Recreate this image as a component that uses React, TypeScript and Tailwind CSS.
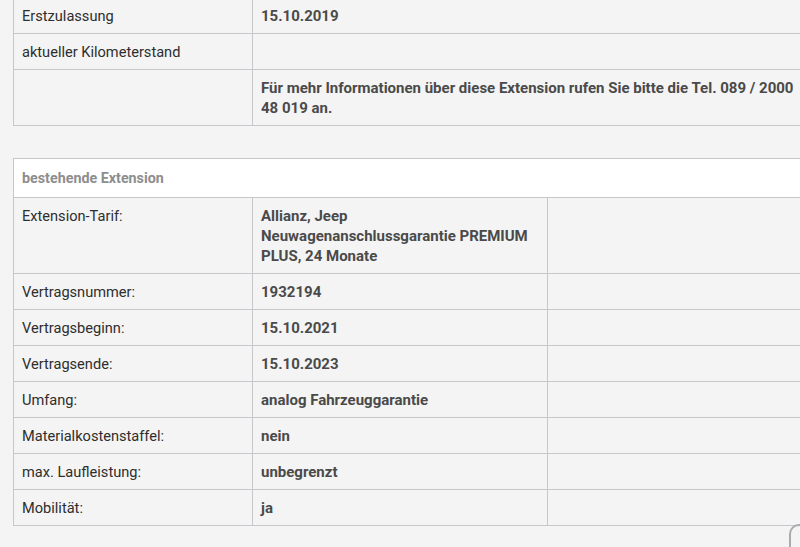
import React from 'react';

type Row = { label: string; value: string };

const extensionRows: Row[] = [
  { label: 'Vertragsnummer:', value: '1932194' },
  { label: 'Vertragsbeginn:', value: '15.10.2021' },
  { label: 'Vertragsende:', value: '15.10.2023' },
  { label: 'Umfang:', value: 'analog Fahrzeuggarantie' },
  { label: 'Materialkostenstaffel:', value: 'nein' },
  { label: 'max. Laufleistung:', value: 'unbegrenzt' },
  { label: 'Mobilität:', value: 'ja' },
];

const cell = 'border border-[#c5c7cb] px-2 pt-[8px] pb-[7px] align-top leading-5';
const labelCell = `${cell} text-[14.6px] text-[#2e2e2e] font-normal`;
const valueCell = `${cell} text-[15px] text-[#4a4a4a] font-bold`;

export default function App() {
  return (
    <div
      className="relative w-[800px] h-[547px] overflow-hidden bg-[#f4f4f4]"
      style={{ fontFamily: 'Roboto, "Noto Sans", sans-serif' }}
    >
      <div className="-mt-[3px] pl-[13px]">
        {/* Fahrzeugdaten */}
        <table className="w-[800px] table-fixed border-collapse">
          <colgroup>
            <col className="w-[239px]" />
            <col />
          </colgroup>
          <tbody>
            <tr>
              <td className={labelCell}>Erstzulassung</td>
              <td className={valueCell}>15.10.2019</td>
            </tr>
            <tr>
              <td className={labelCell}>aktueller Kilometerstand</td>
              <td className={valueCell}>&nbsp;</td>
            </tr>
            <tr>
              <td className={labelCell}></td>
              <td className={valueCell}>
                Für mehr Informationen über diese Extension rufen Sie bitte die Tel. 089 / 2000 48 019 an.
              </td>
            </tr>
          </tbody>
        </table>

        {/* bestehende Extension */}
        <table className="mt-[32px] w-[800px] table-fixed border-collapse">
          <colgroup>
            <col className="w-[239px]" />
            <col className="w-[295px]" />
            <col />
          </colgroup>
          <tbody>
            <tr>
              <td
                colSpan={3}
                className="border border-[#c5c7cb] bg-white px-2 pt-[9px] pb-[9px] leading-5 text-[14.3px] font-bold text-[#8e8e8e]"
              >
                bestehende Extension
              </td>
            </tr>
            <tr>
              <td className={labelCell}>Extension-Tarif:</td>
              <td className={`${valueCell} pr-4`}>
                Allianz, Jeep Neuwagenanschlussgarantie PREMIUM PLUS, 24 Monate
              </td>
              <td className={cell}></td>
            </tr>
            {extensionRows.map((row) => (
              <tr key={row.label}>
                <td className={labelCell}>{row.label}</td>
                <td className={valueCell}>{row.value}</td>
                <td className={cell}></td>
              </tr>
            ))}
          </tbody>
        </table>
      </div>

      {/* floating button edge */}
      <div className="absolute left-[789px] top-[524px] h-[40px] w-[60px] rounded-[10px] border-2 border-[#a9abaf] bg-[#f4f4f4]" />
    </div>
  );
}
